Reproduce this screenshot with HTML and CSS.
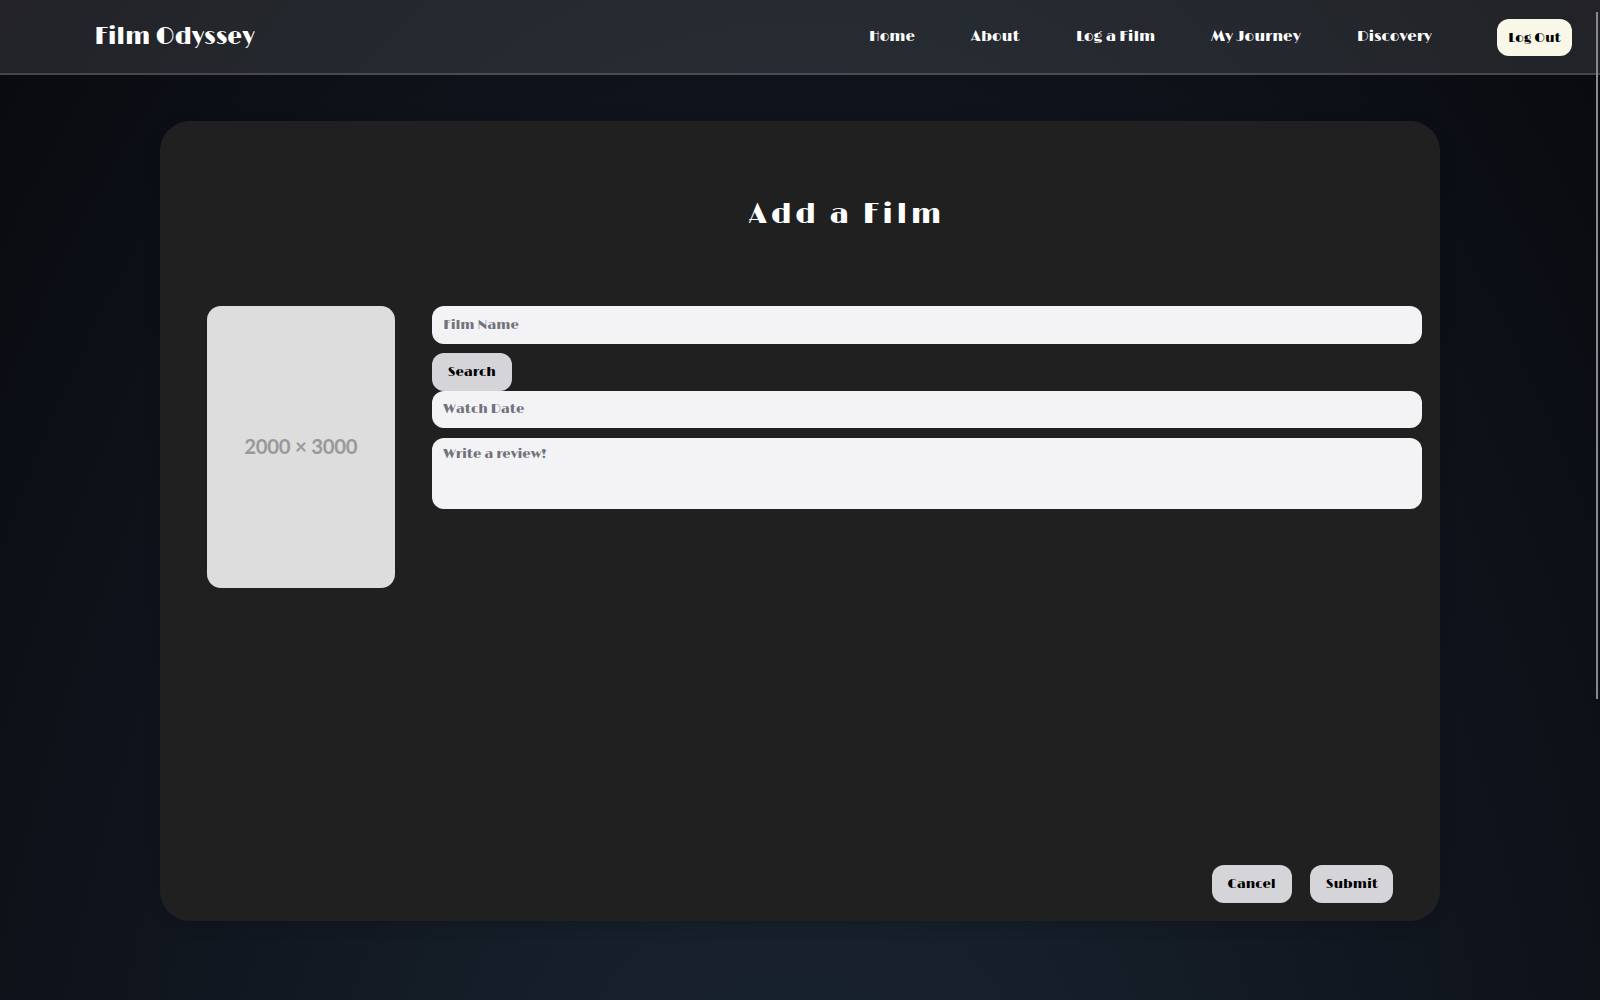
FILE: index.html
```html
<!DOCTYPE html>
<html lang="en">
<head>
<meta charset="utf-8">
<title>Film Odyssey</title>
<link rel="stylesheet" href="styles.css">
</head>
<body>
<div class="page">
<header class="navbar">
  <a class="brand">Film Odyssey</a>
  <nav class="links">
    <a class="home">Home</a>
    <a class="about">About</a>
    <a class="log">Log a Film</a>
    <a class="journey">My Journey</a>
    <a class="discovery">Discovery</a>
  </nav>
  <button class="logout"><span>Log Out</span></button>
</header>
<main class="card">
  <h1 class="title">Add a Film</h1>
  <form class="film-form">
    <div class="poster">2000 × 3000</div>
    <div class="fields">
      <input class="field name" placeholder="Film Name">
      <button type="button" class="btn search">Search</button>
      <input class="field date" placeholder="Watch Date">
      <textarea class="field review" placeholder="Write a review!"></textarea>
    </div>
  </form>
  <div class="actions">
    <button class="btn cancel">Cancel</button>
    <button class="btn submit">Submit</button>
  </div>
</main>
</div>
<div class="scroll-thumb"></div>
</body>
</html>
```
FILE: styles.css
```css
* { box-sizing: border-box; }
html, body { height: 100%; }
body {
  margin: 0;
  overflow: hidden;
  color: #fff;
  font-family: "Limelight", "Lato", sans-serif;
  font-weight: 400;
}
.page {
  display: flow-root;
  height: 100%;
  background: radial-gradient(ellipse at bottom, #1b2735 0%, #090a0f 100%) top / 100% 1420px no-repeat;
}
button, input, textarea { font: inherit; border: 0; margin: 0; }
.navbar {
  display: flex;
  align-items: center;
  height: 74.5px;
  padding: 0 28px 0 94.5px;
  background: rgba(255, 255, 255, 0.1);
  border-bottom: 2px solid rgba(255, 255, 255, 0.16);
}
.brand { font-size: 23.4px; line-height: 30px; white-space: nowrap; margin-top: 1px; }
.links { display: flex; gap: 56px; margin: 2px 0 0 auto; font-size: 15px; line-height: 20px; white-space: nowrap; }
.links a { text-align: left; }
.home { width: 46px; }
.about { width: 49px; }
.log { width: 79px; }
.journey { width: 90px; }
.discovery { width: 75px; }
.logout {
  width: 75px;
  height: 37.5px;
  margin: 2px 0 0 65px;
  padding: 2px 0 0;
  border-radius: 12px;
  background: #f9f7e8;
  color: #000;
  font-size: 13.125px;
}
.card {
  display: flex;
  flex-direction: column;
  width: 1280px;
  height: 800px;
  margin: 46.8px auto 0;
  padding: 74px 18.5px 18.75px 47px;
  border-radius: 30px;
  background: #202020;
  box-shadow: 0 4px 16px rgba(0, 0, 0, 0.15);
}
.title { margin: 0; padding: 0 0 0 65px; font-size: 28.125px; line-height: 40px; font-weight: 400; letter-spacing: 3.75px; text-align: center; }
.film-form { display: flex; gap: 37.5px; margin-top: 71px; }
.poster {
  display: flex;
  align-items: center;
  justify-content: center;
  width: 187.5px;
  height: 281.25px;
  padding-bottom: 1px;
  border-radius: 14px;
  background: #ddd;
  color: #999;
  font: 700 20.4px/24px Lato, sans-serif;
  letter-spacing: -0.3px;
}
.fields { flex: 1; display: flex; flex-direction: column; align-items: flex-start; }
.field { width: 100%; height: 37.5px; padding: 0 11.25px; border-radius: 12px; background: #f3f3f6; font-size: 13.125px; }
.field::placeholder { color: #73737e; opacity: 1; }
.name { margin-bottom: 9.4px; }
.review { height: 71.5px; margin-top: 9.4px; padding-top: 8px; resize: none; }
.btn { height: 37.5px; padding: 0; border-radius: 12px; background: #d5d4d9; color: #000; font-size: 13.125px; }
.search { width: 79.5px; }
.actions { display: flex; justify-content: flex-end; gap: 18.75px; margin-top: auto; padding-right: 28.125px; }
.cancel { width: 80px; }
.submit { width: 83px; }
.scroll-thumb { position: fixed; top: 12px; right: 2px; width: 2px; height: 687px; background: #88898c; }
```
